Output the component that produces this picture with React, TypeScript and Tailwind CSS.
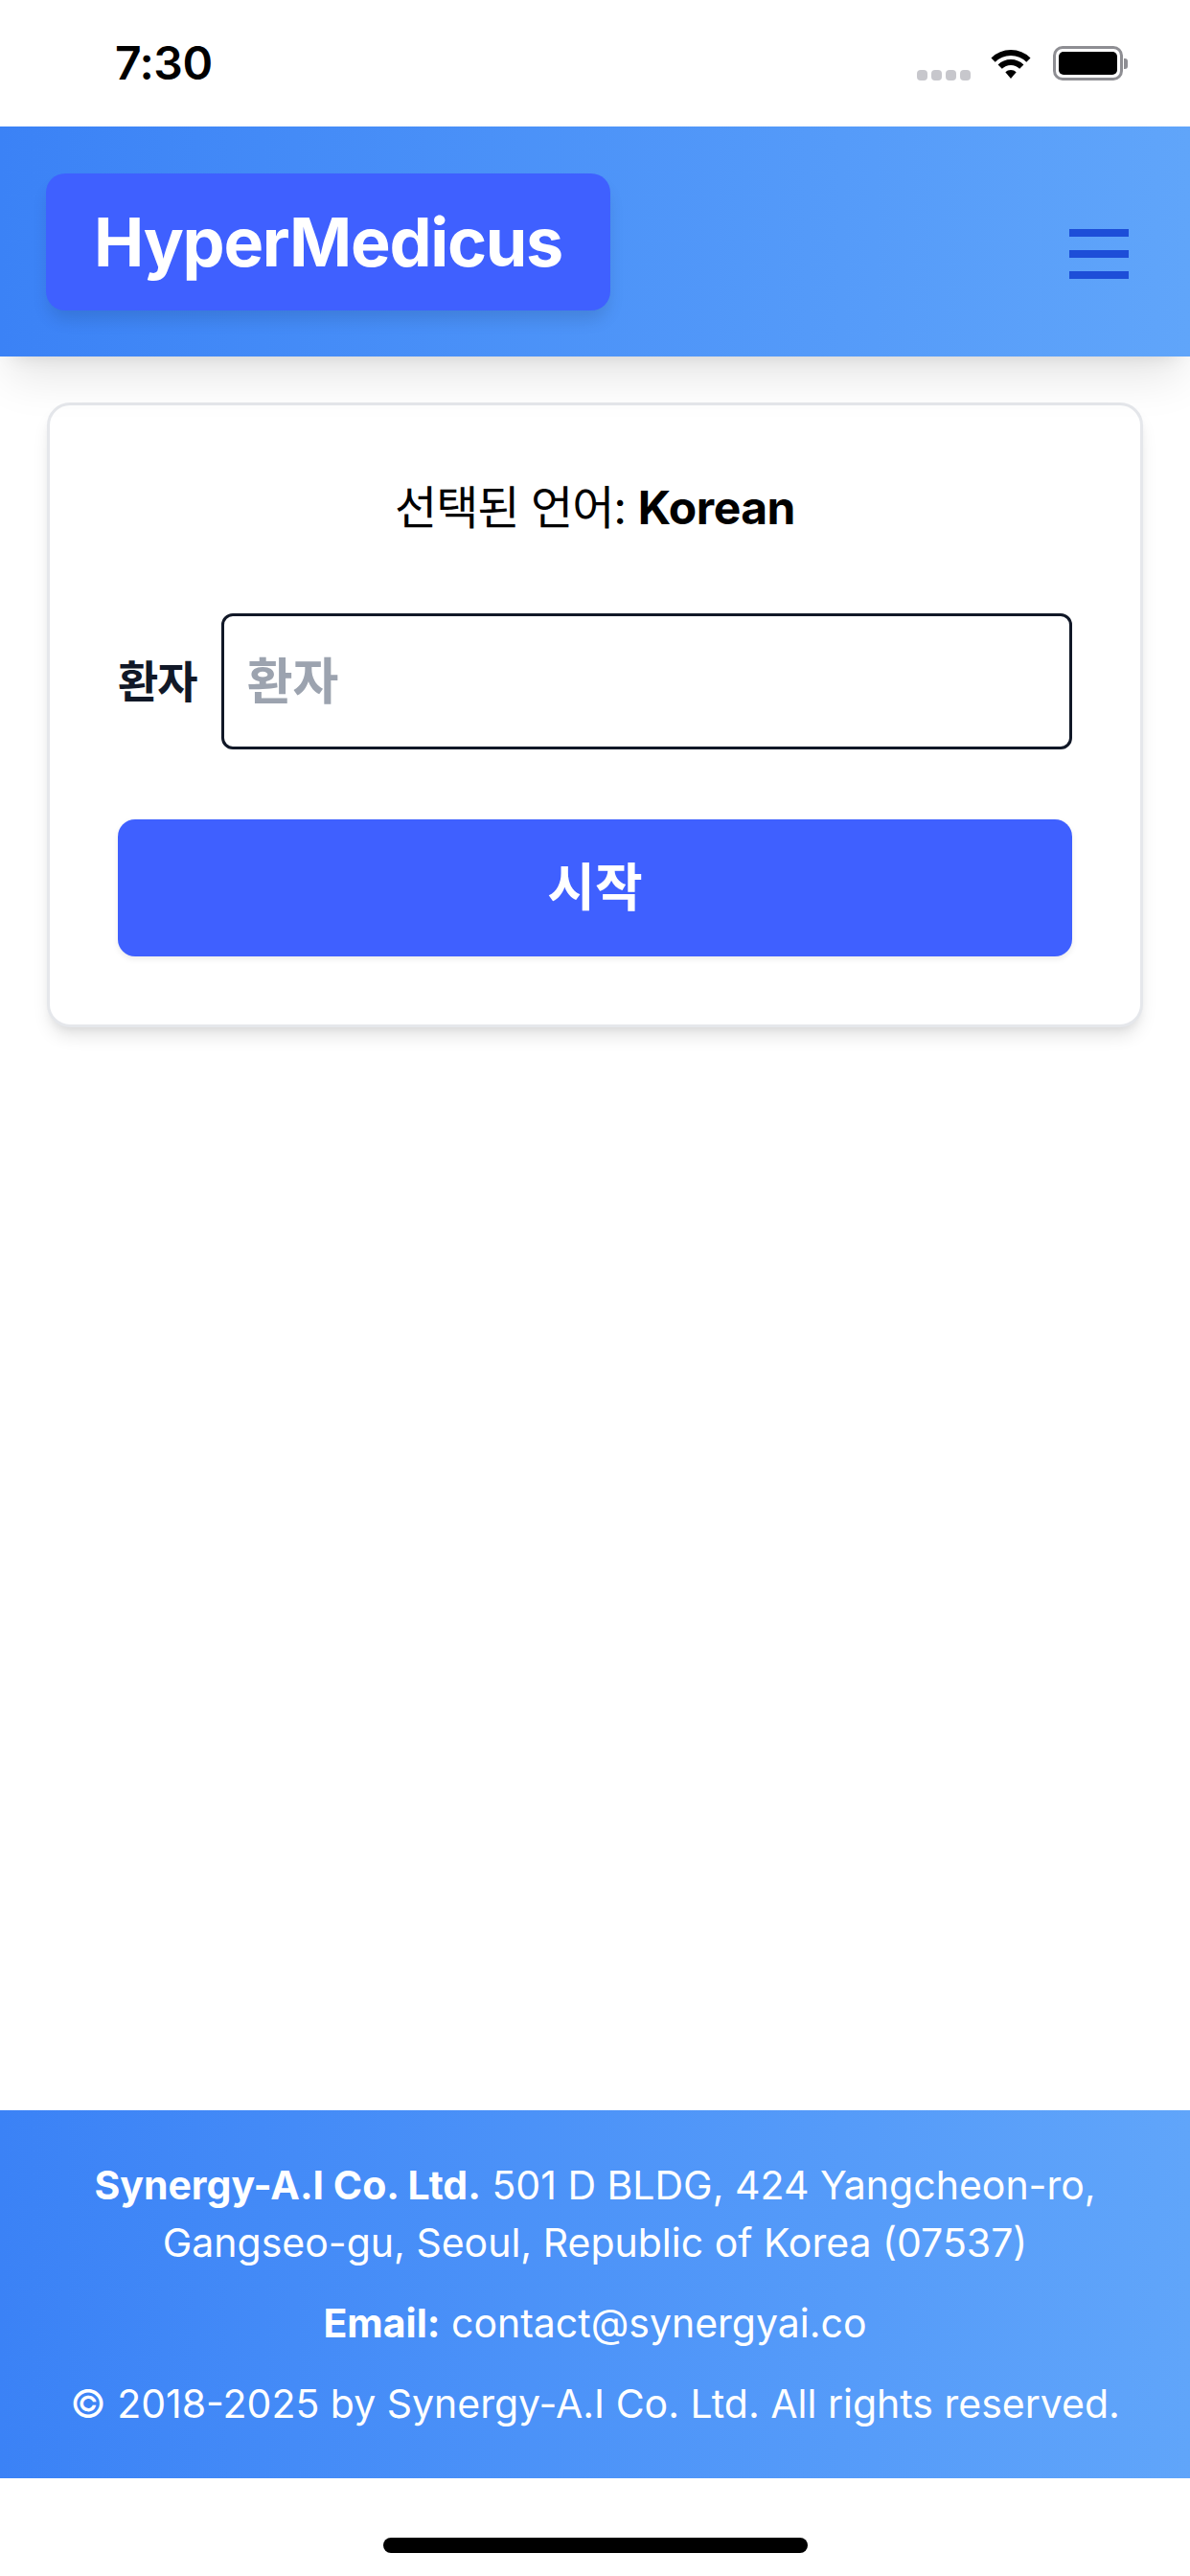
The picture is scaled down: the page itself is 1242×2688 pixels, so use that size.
import { useState } from "react";

function StatusBar() {
  return (
    <div className="h-[132px] flex items-center justify-between pl-[120px] pr-[65px] bg-white">
      <div className="text-[48px] font-semibold text-black tracking-[-0.5px]">7:30</div>
      <div className="flex items-center">
        <div className="flex items-center gap-[4px] mt-[24px]">
          {[0, 1, 2, 3].map((i) => (
            <span key={i} className="w-[11px] h-[11px] rounded-[4px] bg-[#c7c7cc]"></span>
          ))}
        </div>
        <svg width="46" height="33" viewBox="0 0 46 33" className="ml-[19px]">
          <path d="M4.6 12.6 A26 26 0 0 1 41.4 12.6" fill="none" stroke="#000" strokeWidth="6" />
          <path d="M11.7 19.7 A16 16 0 0 1 34.3 19.7" fill="none" stroke="#000" strokeWidth="6" />
          <path d="M23 32 L17.3 25.3 A8 8 0 0 1 28.7 25.3 Z" fill="#000" />
        </svg>
        <div className="flex items-center ml-[21px]">
          <div className="w-[73px] h-[36px] border-[3px] border-[#8e8e93] rounded-[10px] p-[3px]">
            <div className="w-full h-full bg-black rounded-[5px]"></div>
          </div>
          <div className="w-[4px] h-[11px] bg-[#8e8e93] rounded-r-[3px] ml-[1px]"></div>
        </div>
      </div>
    </div>
  );
}

function Header() {
  return (
    <div className="relative z-10 h-[240px] px-[48px] flex items-center justify-between bg-linear-to-r from-[#3b82f6] to-[#60a5fa] shadow-[0_30px_45px_-9px_rgba(0,0,0,0.1),0_12px_18px_-12px_rgba(0,0,0,0.1)]">
      <div className="h-[143px] px-[50px] flex items-center rounded-[20px] bg-[#3f60ff] text-white font-bold text-[70px] tracking-[-1.3px] shadow-[0_12px_18px_-3px_rgba(0,0,0,0.12)]">
        HyperMedicus
      </div>
      <button className="flex flex-col gap-[14px] mt-[25px] mr-[16px]">
        <span className="block w-[62px] h-[8px] bg-[#1d4ed8]"></span>
        <span className="block w-[62px] h-[8px] bg-[#1d4ed8]"></span>
        <span className="block w-[62px] h-[8px] bg-[#1d4ed8]"></span>
      </button>
    </div>
  );
}

function StartCard() {
  const [patient, setPatient] = useState("");
  return (
    <div className="mx-[49px] mt-[48px] border-[3px] border-[#e5e7eb] rounded-[24px] p-[71px] bg-white shadow-[0_12px_18px_-3px_rgba(0,0,0,0.1),0_6px_12px_-6px_rgba(0,0,0,0.1)]">
      <div className="text-center text-[48px] leading-[72px] text-black tracking-[-1px]">
        선택된 언어: <span className="font-bold tracking-[-0.5px]">Korean</span>
      </div>
      <div className="mt-[74px] flex items-center gap-[25px]">
        <label className="text-[46px] font-bold text-[#111827] tracking-[-1px]">환자</label>
        <input
          value={patient}
          onChange={(e) => setPatient(e.target.value)}
          placeholder="환자"
          className="flex-1 min-w-0 h-[142px] border-[3px] border-[#111827] rounded-[12px] px-[24px] text-[52px] font-semibold text-[#111827] placeholder:text-[#9ca3af] outline-none"
        />
      </div>
      <button className="mt-[73px] w-full h-[143px] rounded-[18px] bg-[#3f60ff] text-white font-bold text-[54px] shadow-[0_3px_6px_rgba(0,0,0,0.08)]">
        시작
      </button>
    </div>
  );
}

function Footer() {
  return (
    <div className="mt-auto p-[48px] bg-linear-to-r from-[#3b82f6] to-[#60a5fa] text-white text-center text-[41px] leading-[60px] flex flex-col gap-[24px]">
      <p>
        <span className="font-bold">Synergy-A.I Co. Ltd.</span> 501 D BLDG, 424 Yangcheon-ro,
        <br />
        Gangseo-gu, Seoul, Republic of Korea (07537)
      </p>
      <p>
        <span className="font-bold">Email:</span> contact@synergyai.co
      </p>
      <p>© 2018-2025 by Synergy-A.I Co. Ltd. All rights reserved.</p>
    </div>
  );
}

export default function App() {
  return (
    <div className="w-[1242px] h-[2688px] flex flex-col bg-white font-['Inter','Noto_Sans_CJK_KR',sans-serif]">
      <StatusBar />
      <div className="flex-1 flex flex-col">
        <Header />
        <StartCard />
        <Footer />
      </div>
      <div className="h-[102px] flex justify-center bg-white">
        <div className="mt-[62px] w-[443px] h-[16px] rounded-full bg-black"></div>
      </div>
    </div>
  );
}
